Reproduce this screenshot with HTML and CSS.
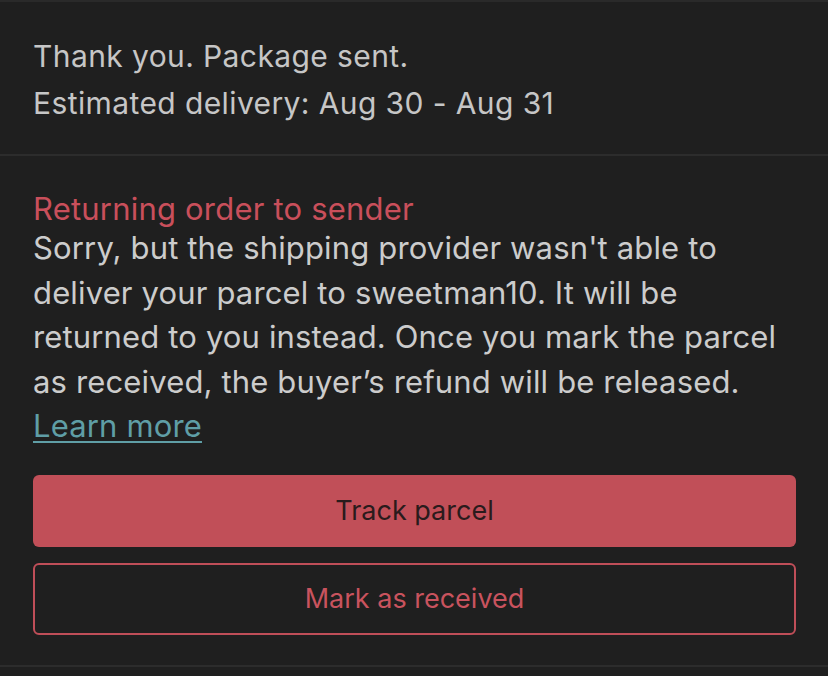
FILE: index.html
```html
<!DOCTYPE html>
<html>
<head>
<meta charset="utf-8">
<link rel="stylesheet" href="styles.css">
</head>
<body>
<div class="card">
  <section class="status">
    <p class="status-title">Thank you. Package sent.</p>
    <p class="status-sub">Estimated delivery: Aug 30 - Aug 31</p>
  </section>
  <section class="notice">
    <h2 class="notice-title">Returning order to sender</h2>
    <p class="notice-body">Sorry, but the shipping provider wasn't able to<br>deliver your parcel to sweetman10. It will be<br>returned to you instead. Once you mark the parcel<br>as received, the buyer’s refund will be released.<br><a class="link" href="#">Learn more</a></p>
    <div class="actions">
      <button class="btn btn-primary">Track parcel</button>
      <button class="btn btn-outline">Mark as received</button>
    </div>
  </section>
</div>
</body>
</html>
```
FILE: styles.css
```css
html, body {
  margin: 0;
  padding: 0;
  background: #1f1f1f;
}
body {
  font-family: Inter, "Noto Sans", sans-serif;
  color: #c6c6c6;
  width: 828px;
  height: 676px;
  overflow: hidden;
}
.card {
  border-top: 2px solid #2a2a2a;
}
.status {
  padding: 31px 33px 27px;
  border-bottom: 2px solid #2c2c2c;
}
.status p {
  margin: 0;
  font-size: 30px;
  line-height: 47px;
  letter-spacing: 0.4px;
}
.notice {
  padding: 35px 32px 30px 33px;
  border-bottom: 2px solid #2c2c2c;
}
.notice-title {
  margin: 0;
  font-weight: 400;
  font-size: 31px;
  line-height: 35px;
  letter-spacing: 0.2px;
  color: #c94f5b;
}
.notice-body {
  margin: 0;
  font-size: 31px;
  line-height: 44.5px;
  letter-spacing: 0.15px;
  color: #cccccc;
  white-space: nowrap;
}
.link {
  color: #5f9ea6;
  text-decoration: underline;
  text-underline-offset: 4px;
  text-decoration-thickness: 2px;
}
.actions {
  display: flex;
  flex-direction: column;
  gap: 16px;
  margin-top: 26px;
}
.btn {
  height: 72px;
  border-radius: 6px;
  font-family: inherit;
  font-size: 27px;
  cursor: pointer;
}
.btn-primary {
  background: #c14f58;
  border: none;
  color: #2a1b1c;
}
.btn-outline {
  background: transparent;
  border: 2px solid #bf4e58;
  color: #c9535e;
}
```
